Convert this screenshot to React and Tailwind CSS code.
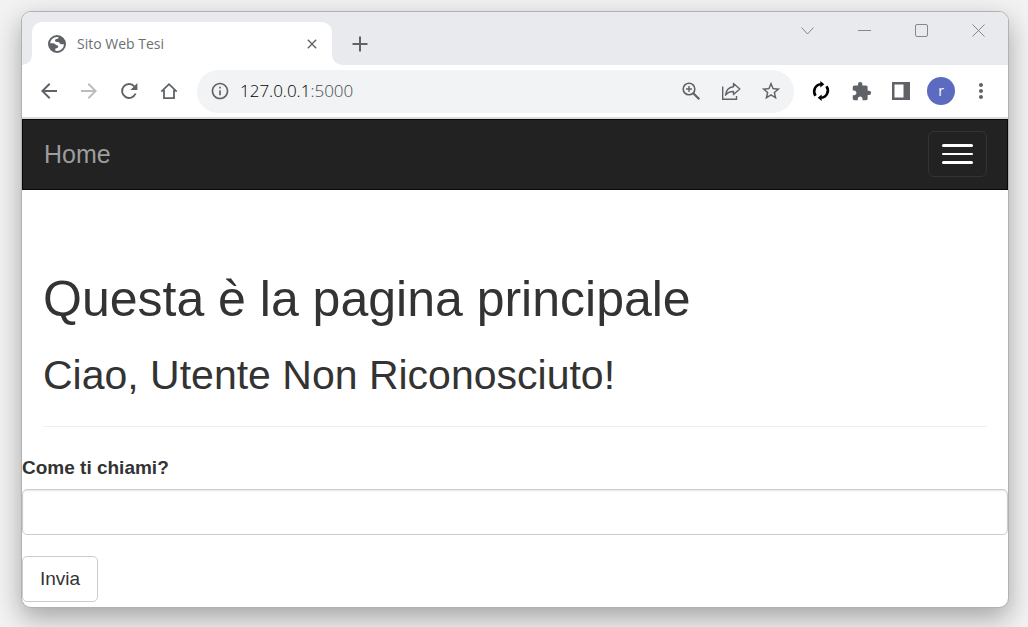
import { MdArrowBack, MdArrowForward, MdExtension, MdOutlineInfo, MdStarBorder, MdMoreVert, MdClose, MdAdd } from "react-icons/md";

function GlobeIcon() {
  return (
    <svg viewBox="0 0 18 18" className="size-[18px] shrink-0" aria-hidden="true">
      <circle cx="9" cy="9" r="8" fill="#fff" stroke="#5f6368" strokeWidth="2" />
      <path d="M10.500 1v1.600c0 1-.8 1.300-1.700 1.300C7.600 3.900 7 4.600 7 5.600c0 1 .8 1.400 1.800 1.400h1.400c1.300 0 1.300 2.200 2.800 2.200h3.800V9A8 8 0 0 0 10.500 1z" fill="#5f6368" />
      <path d="M1.200 8.300h4c1.700 0 2.200 1.900 3.500 1.900s1.500.8 1.500 1.600-.8 1.500-1.900 1.500c-.9 0-1 .7-1 1.500v1.900A8 8 0 0 1 1.200 8.300z" fill="#5f6368" />
    </svg>
  );
}

function ReloadIcon() {
  return (
    <svg viewBox="0 0 20 20" className="size-5" fill="none" stroke="#5f6368" strokeWidth="1.900" aria-hidden="true">
      <path d="M16.600 12.500A7 7 0 1 1 15.500 5.500" />
      <path d="M18.400 2v7h-7z" fill="#5f6368" stroke="none" />
    </svg>
  );
}

function HomeIcon() {
  return (
    <svg viewBox="0 0 20 20" className="size-5" fill="none" stroke="#5f6368" strokeWidth="1.800" aria-hidden="true">
      <path d="M2.300 10.700L10 3.200l7.700 7.500M5 9v8.200h10V9" />
    </svg>
  );
}

function ZoomIcon() {
  return (
    <svg viewBox="0 0 20 20" className="size-5" fill="none" stroke="#5f6368" aria-hidden="true">
      <circle cx="8" cy="8" r="5.800" strokeWidth="1.600" />
      <path d="M12.300 12.300l6 6" strokeWidth="2.200" />
      <path d="M5 8h6M8 5v6" strokeWidth="1.400" />
    </svg>
  );
}

function ShareIcon() {
  return (
    <svg viewBox="0 0 20 20" className="size-5" fill="none" stroke="#5f6368" strokeWidth="1.400" aria-hidden="true">
      <path d="M1.700 5.500v12.800h13.800v-3.300" />
      <path d="M12.500 2.500l6.300 5.500-6.300 5.500V10.500c-3.500 0-6 .8-8 3.700.5-4.500 3-8 8-8.500z" strokeLinejoin="round" />
    </svg>
  );
}

function SyncIcon() {
  return (
    <svg viewBox="0 0 20 20" className="size-5" fill="none" stroke="#000" strokeWidth="2.600" aria-hidden="true">
      <path d="M4.600 14.800A7.300 7.300 0 0 1 9.800 3.200M15.400 5.200A7.300 7.300 0 0 1 10.200 16.800" />
      <path d="M9.300 0l4 3.200-4 3.400zM10.700 20l-4-3.200 4-3.400z" fill="#000" stroke="none" />
    </svg>
  );
}

function PanelIcon() {
  return (
    <svg viewBox="0 0 18 18" className="size-[18px]" aria-hidden="true">
      <path d="M0 0h18v18H0zM2.500 2.500v13h9v-13z" fill="#5f6368" fillRule="evenodd" />
    </svg>
  );
}

function ToolButton({ label, children }) {
  return (
    <button type="button" aria-label={label} className="flex h-10 w-10 shrink-0 items-center justify-center text-[#5f6368]">
      {children}
    </button>
  );
}

function CaptionButton({ label, path }) {
  return (
    <button type="button" aria-label={label} className="flex h-[37px] w-[57px] items-center justify-center">
      <svg viewBox="0 0 13 13" className="size-[13px]" fill="none" stroke="#85878a" strokeWidth="1" aria-hidden="true">
        <path d={path} />
      </svg>
    </button>
  );
}

function TabStrip() {
  return (
    <div className="flex h-[53px] items-start bg-[#e8eaed] pr-px">
      <div className="flex h-full flex-1 items-end">
        <div className="h-2.5 w-2.5 bg-white">
          <div className="h-full w-full rounded-br-[10px] bg-[#e8eaed]" />
        </div>
        <div className="flex h-[43px] w-[300px] items-center rounded-t-[10px] bg-white pr-3 pl-4">
          <GlobeIcon />
          <span className="ml-[11px] flex-1 font-['Open_Sans',sans-serif] text-sm text-[#6b6f73]">Sito Web Tesi</span>
          <button type="button" aria-label="Chiudi scheda" className="text-[#5f6368]">
            <MdClose className="size-4" />
          </button>
        </div>
        <div className="h-2.5 w-2.5 bg-white">
          <div className="h-full w-full rounded-bl-[10px] bg-[#e8eaed]" />
        </div>
        <button type="button" aria-label="Nuova scheda" className="ml-1.5 flex h-[43px] items-center text-[#5f6368]">
          <svg viewBox="0 0 24 24" className="size-6" stroke="currentColor" strokeWidth="2" aria-hidden="true">
            <path d="M4.500 12h15M12 4.500v15" />
          </svg>
        </button>
      </div>
      <CaptionButton label="Cerca schede" path="M.5 3.500l6 6.500 6-6.500" />
      <CaptionButton label="Riduci a icona" path="M0 6.500h13" />
      <CaptionButton label="Ingrandisci" path="M2 .5h9q1.500 0 1.500 1.500v9q0 1.500-1.500 1.500H2Q.5 12.500.5 11V2Q.5.500 2 .5z" />
      <CaptionButton label="Chiudi" path="M.5.500l12 12M12.500.500l-12 12" />
    </div>
  );
}

function Toolbar() {
  return (
    <div className="flex h-[54px] items-center border-b-2 border-[#d9dbde] bg-white px-[7px]">
      <ToolButton label="Indietro"><MdArrowBack className="size-6" /></ToolButton>
      <ToolButton label="Avanti"><MdArrowForward className="size-6 text-[#babcbe]" /></ToolButton>
      <ToolButton label="Ricarica"><ReloadIcon /></ToolButton>
      <ToolButton label="Pagina iniziale"><HomeIcon /></ToolButton>
      <div className="mr-[7px] ml-2 flex h-[43px] min-w-0 flex-1 items-center rounded-full bg-[#f1f3f4] px-[3px]">
        <ToolButton label="Informazioni sul sito"><MdOutlineInfo className="size-5" /></ToolButton>
        <div className="flex-1 font-['Open_Sans',sans-serif] text-[17px] font-light text-[#45494d]">
          <span className="text-black">127.0.0.1</span>:5000
        </div>
        <ToolButton label="Zoom"><ZoomIcon /></ToolButton>
        <ToolButton label="Condividi"><ShareIcon /></ToolButton>
        <ToolButton label="Aggiungi ai preferiti"><MdStarBorder className="size-[22px]" /></ToolButton>
      </div>
      <ToolButton label="Sincronizza"><SyncIcon /></ToolButton>
      <ToolButton label="Estensioni"><MdExtension className="size-[21px]" /></ToolButton>
      <ToolButton label="Riquadro laterale"><PanelIcon /></ToolButton>
      <ToolButton label="Profilo">
        <span className="flex size-7 items-center justify-center rounded-full bg-[#5c6bc0] font-['Open_Sans',sans-serif] text-sm text-white">r</span>
      </ToolButton>
      <ToolButton label="Menu"><MdMoreVert className="size-6" /></ToolButton>
    </div>
  );
}

function Navbar() {
  return (
    <nav className="flex h-[71px] items-center justify-between border border-[#080808] bg-[#222] pr-5 pl-[21px]">
      <a href="#" className="text-[25px] text-[#9d9d9d]">Home</a>
      <button type="button" aria-label="Menu di navigazione" className="mt-[11px] flex h-[46px] w-[59px] flex-col items-center justify-center gap-1.5 self-start rounded-md border border-[#333]">
        <span className="h-[3px] w-[31px] rounded-sm bg-white" />
        <span className="h-[2px] w-[31px] rounded-sm bg-white" />
        <span className="h-[3px] w-[31px] rounded-sm bg-white" />
      </button>
    </nav>
  );
}

export default function App() {
  return (
    <div className="min-h-screen bg-[#f2f2f2] pt-[11px] pr-[19px] pb-[19px] pl-[21px] font-['Liberation_Sans',Arial,sans-serif] text-[#333]">
      <div className="overflow-hidden rounded-[10px] border border-[#b0b2b1] bg-white shadow-[0_10px_26px_rgba(0,0,0,0.32)]">
        <TabStrip />
        <Toolbar />
        <Navbar />
        <main>
          <header className="mx-[21px] border-b border-[#eee] pt-[80px] pb-6">
            <h1 className="text-[50px] leading-[58px]">Questa è la pagina principale</h1>
            <h2 className="mt-5 text-[41px] leading-[54px]">Ciao, Utente Non Riconosciuto!</h2>
          </header>
          <form className="pt-7 pb-[5px]" onSubmit={(e) => e.preventDefault()}>
            <label htmlFor="name" className="block text-[19px] leading-[26px] font-bold">Come ti chiami?</label>
            <input id="name" type="text" className="mt-2 block h-[46px] w-full rounded-[5px] border border-[#ccc] bg-white px-4 text-[19px] shadow-[inset_0_1px_2px_rgba(0,0,0,0.1)] outline-none" />
            <button type="submit" className="mt-[21px] block h-[46px] rounded-[5px] border border-[#ccc] bg-white px-[17px] text-[19px]">Invia</button>
          </form>
        </main>
      </div>
    </div>
  );
}
